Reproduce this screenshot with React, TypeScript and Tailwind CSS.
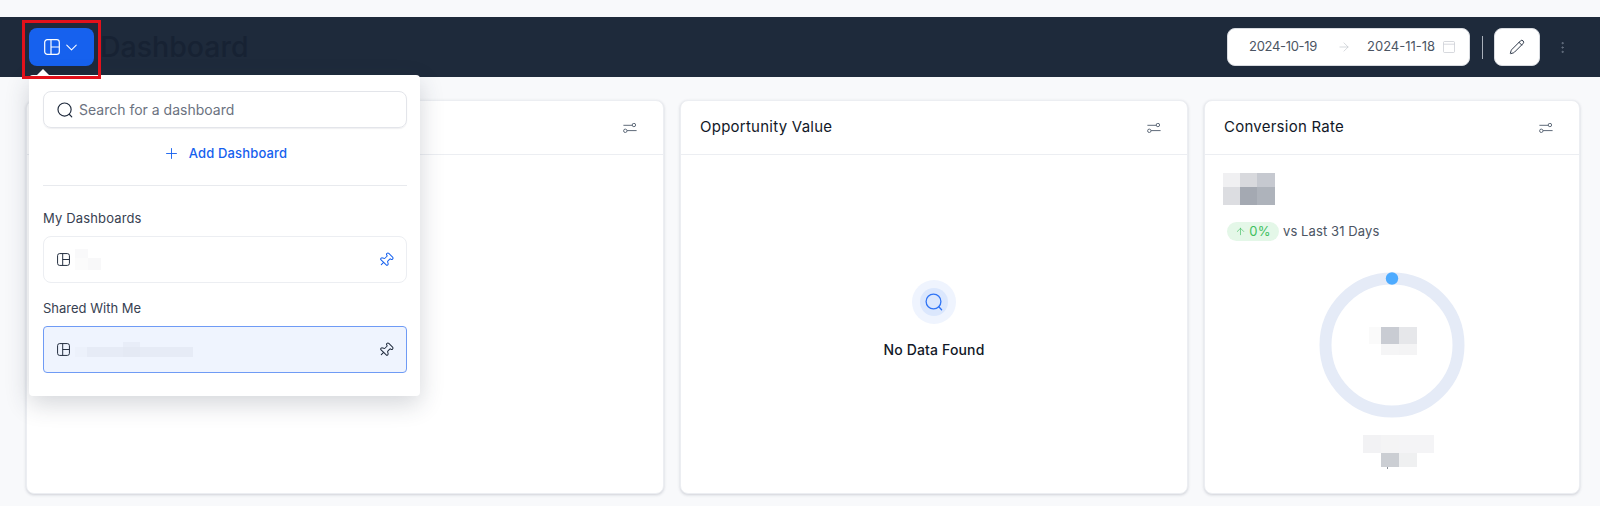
import React, { FC } from 'react';
import { ArrowRight, ArrowUp, ChevronDown, MoreVertical, Pencil, Pin, Plus } from 'lucide-react';

const LayoutIcon: FC<{ className?: string }> = ({ className }) => (
    <svg viewBox="0 0 16 16" fill="none" stroke="currentColor" strokeWidth="1.2" className={className}>
        <rect x="0.7" y="0.7" width="14.6" height="14.6" rx="2.6" />
        <path d="M7 0.7V15.3M7 8H15.3" />
    </svg>
);

const SearchIcon: FC<{ className?: string }> = ({ className }) => (
    <svg viewBox="0 0 18 18" fill="none" stroke="currentColor" strokeWidth="1.3" className={className}>
        <circle cx="8.5" cy="8.5" r="7.4" />
        <path d="M13.8 13.8L16.6 16.8" strokeLinecap="round" />
    </svg>
);

const FilterIcon: FC = () => (
    <svg viewBox="0 0 14 10" fill="none" stroke="currentColor" strokeWidth="1" className="h-[10px] w-[14px] text-[#5f6b7a]">
        <circle cx="10.9" cy="2" r="1.7" />
        <circle cx="2.3" cy="7.8" r="1.7" />
        <path d="M0.4 2.3H9.2M4 7.6H13.6" />
    </svg>
);

const CalendarIcon: FC = () => (
    <svg viewBox="0 0 12 12" fill="none" stroke="currentColor" strokeWidth="0.7" className="h-3 w-3 text-[#c5c9d0]">
        <rect x="0.5" y="0.5" width="11" height="11" rx="1" />
        <path d="M0.5 3.2H11.5" />
    </svg>
);

// Pixelated redaction block from the original screenshot
const Blob: FC<{ cols: number[]; rows: number[]; cells: string[] }> = ({ cols, rows, cells }) => (
    <div
        className="grid blur-[0.4px]"
        style={{
            gridTemplateColumns: cols.map(c => `${c}px`).join(' '),
            gridTemplateRows: rows.map(r => `${r}px`).join(' '),
        }}
    >
        {cells.map((color, i) => (
            <div key={i} style={{ backgroundColor: color }} />
        ))}
    </div>
);

const CardHeader: FC<{ title?: string }> = ({ title }) => (
    <div className="flex h-[54px] shrink-0 items-center justify-between border-b border-[#eceef2] pl-[19px] pr-[26px]">
        <span className="-mt-[1px] text-[15px] leading-5 tracking-[0.25px] text-[#111827]">{title}</span>
        <FilterIcon />
    </div>
);

const Card: FC<{ title?: string; children?: React.ReactNode }> = ({ title, children }) => (
    <div className="flex h-[394px] flex-col rounded-lg border border-[#eceef2] bg-white shadow-[0_1px_3px_rgba(60,70,90,0.22)]">
        <CardHeader title={title} />
        {children}
    </div>
);

const DashboardRow: FC<{ active?: boolean; pinClass: string; children: React.ReactNode }> = ({ active, pinClass, children }) => (
    <div
        className={
            active
                ? 'flex h-[47px] items-center rounded border border-[#6f9bf5] bg-[#eff4fe] pl-[13px] pr-[12px]'
                : 'flex h-[47px] items-center rounded-lg border border-[#eceef2] bg-white pl-[13px] pr-[12px]'
        }
    >
        <LayoutIcon className="h-[13px] w-[13px] text-[#1f2a3c]" />
        <div className="ml-[5px] flex-1">{children}</div>
        <Pin size={16} strokeWidth={1.5} className={`rotate-45 ${pinClass}`} />
    </div>
);

const DashboardMenu: FC = () => (
    <div className="absolute left-[29px] top-[75px] z-10 h-[321px] w-[391px] rounded-sm bg-white pl-[14px] pr-[13px] pt-[16px] shadow-[0_8px_24px_rgba(40,50,70,0.2)]">
        <div className="absolute -top-[6px] left-[7px] h-0 w-0 border-x-[7px] border-b-[7px] border-x-transparent border-b-white" />
        <div className="flex h-[37px] items-center rounded-lg border border-[#e3e5ea] pl-[13px] shadow-[0_1px_1px_rgba(60,70,90,0.08)]">
            <SearchIcon className="h-4 w-4 text-[#1f2a3c]" />
            <span className="ml-[6px] text-sm text-[#6b7280]">Search for a dashboard</span>
        </div>
        <div className="mt-[15px] flex items-center justify-center gap-[9px] text-[13px] font-medium leading-5 tracking-[0.15px] text-[#1661ee]">
            <Plus size={17} strokeWidth={1.3} />
            Add Dashboard
        </div>
        <div className="mt-[22px] border-t border-[#e8eaee]" />
        <p className="mt-[22px] text-[13px] leading-5 tracking-[0.15px] text-[#374151]">My Dashboards</p>
        <div className="mt-[8px]">
            <DashboardRow pinClass="text-[#1661ee]">
                <Blob cols={[13, 13]} rows={[9, 12]} cells={['#f9f9fa', '#ffffff', '#fbfbfb', '#f8f8f9']} />
            </DashboardRow>
        </div>
        <p className="mt-[15px] text-[13px] leading-5 text-[#374151]">Shared With Me</p>
        <div className="mt-[8px]">
            <DashboardRow active pinClass="text-[#1f2a3c]">
                <Blob cols={[12, 36, 17, 53]} rows={[5, 10]} cells={['#eff4fe', '#eff4fe', '#e8edf8', '#eff4fe', '#ecf1fb', '#e6ebf6', '#e4e9f4', '#e6ebf6']} />
            </DashboardRow>
        </div>
    </div>
);

const TopBar: FC = () => (
    <div className="mt-[17px] flex h-[60px] items-center bg-[#1e2a3b] pl-[29px] pr-[30px]">
        <div className="flex h-[38px] w-[65px] items-center justify-center gap-[2px] rounded-lg bg-[#1661ee] text-white">
            <LayoutIcon className="ml-[1px] h-4 w-4" />
            <ChevronDown size={19} strokeWidth={1.3} />
        </div>
        <h1 className="ml-[6px] flex-1 text-[28.5px] font-medium text-[#172233]">Dashboard</h1>
        <div className="flex h-[38px] w-[243px] items-center whitespace-nowrap rounded-lg border border-[#d8dbe0] bg-white pl-[21px] text-[13px] text-[#4b5563]">
            <span className="w-[68px] tracking-[-0.3px]">2024-10-19</span>
            <ArrowRight size={14} strokeWidth={1} className="ml-[20px] shrink-0 text-[#b9bdc5]" />
            <span className="ml-[16px]">2024-11-18</span>
            <span className="ml-[8px]"><CalendarIcon /></span>
        </div>
        <div className="ml-[12px] h-[23px] w-px bg-[#a9b0ba]" />
        <div className="ml-[11px] flex h-[38px] w-[46px] items-center justify-center rounded-lg border border-[#d8dbe0] bg-white text-[#1f2a3c]">
            <Pencil size={16} strokeWidth={1.4} />
        </div>
        <MoreVertical size={15} strokeWidth={1.6} className="ml-[15px] text-[#6b7686]" />
    </div>
);

const ConversionBody: FC = () => (
    <div className="flex flex-col pl-[18px] pt-[18px]">
        <Blob
            cols={[17, 17, 18]}
            rows={[14, 18]}
            cells={['#f0f0f2', '#d8d9dd', '#c6c9d0', '#dcdde1', '#a4a9b2', '#aeb3bb']}
        />
        <div className="ml-[4px] mt-[17px] flex items-center gap-[4px]">
            <span className="flex h-[19px] w-[52px] items-center justify-center gap-[3px] rounded-full bg-[#e4f7e8] text-[13px] tracking-[0.3px] text-[#3fbf5f]">
                <ArrowUp size={11} strokeWidth={1.4} />
                0%
            </span>
            <span className="text-[13px] tracking-[0.1px] text-[#4b5563]">vs Last 31 Days</span>
        </div>
        <div className="relative -ml-[18px] mt-[30px] flex justify-center">
            <svg width="146" height="146" viewBox="0 0 146 146">
                <circle cx="73" cy="73" r="66.5" fill="none" stroke="#e5ebf7" strokeWidth="12" />
                <circle cx="73" cy="6.5" r="6.2" fill="#4dabff" />
            </svg>
            <div className="absolute left-[164px] top-[55px]">
                <Blob cols={[12, 18, 18]} rows={[17, 11]} cells={['#fafafa', '#c9ccd3', '#e6e7ea', '#ffffff', '#f5f5f6', '#f4f4f5']} />
            </div>
        </div>
        <div className="relative ml-[140px] mt-[17px]">
            <Blob cols={[18, 18, 18, 17]} rows={[18, 14]} cells={['#f2f2f4', '#f4f4f5', '#f4f4f6', '#f4f4f6', '#ffffff', '#cbced3', '#eff0f1', '#ffffff']} />
            <div className="absolute left-[24px] top-[32px] h-[2px] w-px bg-[#8a8f98]" />
        </div>
    </div>
);

const App: FC = () => (
    <div className="relative h-[506px] w-[1600px] overflow-hidden bg-[#f8f9fb] font-['Inter',sans-serif]">
        <TopBar />
        <div className="mt-[23px] grid grid-cols-[638px_508px_376px] gap-x-4 pl-[26px]">
            <Card />
            <Card title="Opportunity Value">
                <div className="flex flex-col items-center pt-[125px]">
                    <div className="flex h-[44px] w-[44px] items-center justify-center rounded-full bg-[#eff4fe]">
                        <div className="flex h-[28px] w-[28px] items-center justify-center rounded-full bg-[#dbe7fd]">
                            <SearchIcon className="h-[18px] w-[18px] text-[#2f74f5]" />
                        </div>
                    </div>
                    <p className="mt-[16px] text-sm font-medium leading-5 tracking-[0.15px] text-[#111827]">No Data Found</p>
                </div>
            </Card>
            <Card title="Conversion Rate">
                <ConversionBody />
            </Card>
        </div>
        <DashboardMenu />
        {/* Red annotation box drawn over the shot */}
        <div className="absolute left-[22px] top-[20px] z-20 h-[59px] w-[79px] border-[3px] border-[#e3111b]" />
    </div>
);

export default App;
